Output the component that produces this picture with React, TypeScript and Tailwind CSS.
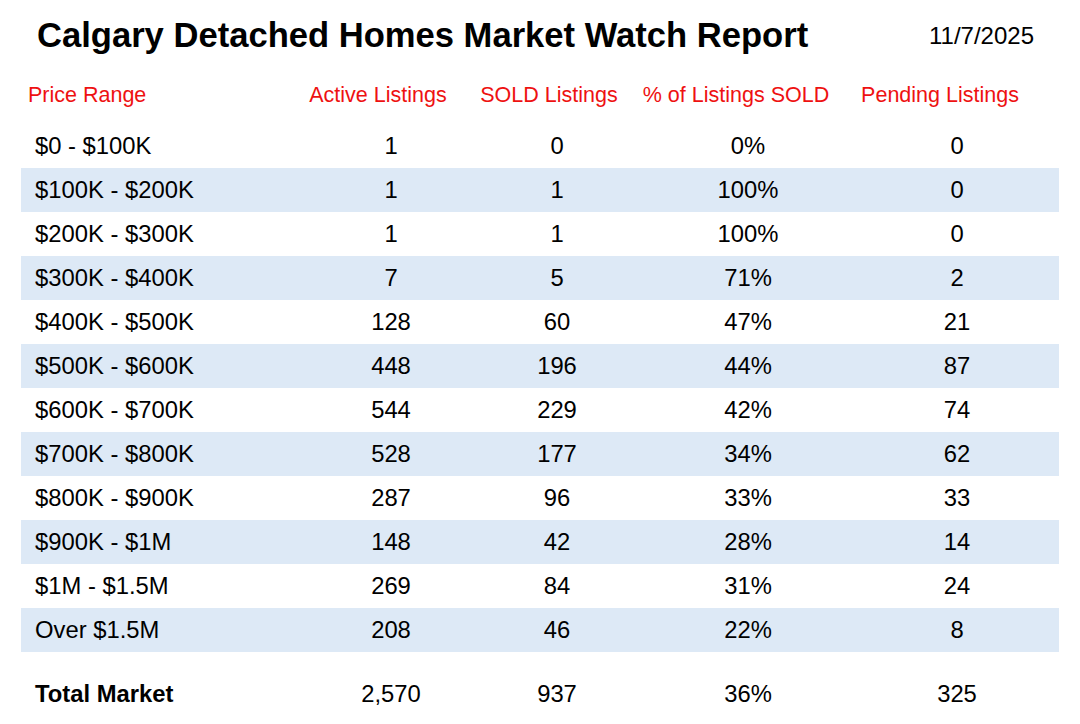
const rows: [string, string, string, string, string][] = [
  ["$0 - $100K", "1", "0", "0%", "0"],
  ["$100K - $200K", "1", "1", "100%", "0"],
  ["$200K - $300K", "1", "1", "100%", "0"],
  ["$300K - $400K", "7", "5", "71%", "2"],
  ["$400K - $500K", "128", "60", "47%", "21"],
  ["$500K - $600K", "448", "196", "44%", "87"],
  ["$600K - $700K", "544", "229", "42%", "74"],
  ["$700K - $800K", "528", "177", "34%", "62"],
  ["$800K - $900K", "287", "96", "33%", "33"],
  ["$900K - $1M", "148", "42", "28%", "14"],
  ["$1M - $1.5M", "269", "84", "31%", "24"],
  ["Over $1.5M", "208", "46", "22%", "8"],
];

function Row({ cells, shaded, bold }: { cells: string[]; shaded?: boolean; bold?: boolean }) {
  return (
    <div
      className={`grid grid-cols-[300px_140px_192px_190px_216px] h-[44px] items-center text-[23.8px] text-black ${
        shaded ? "bg-[#dde9f6]" : ""
      }`}
    >
      <div className={`pl-[14px] whitespace-nowrap ${bold ? "font-bold" : ""}`}>{cells[0]}</div>
      <div className="text-center">{cells[1]}</div>
      <div className="text-center">{cells[2]}</div>
      <div className="text-center">{cells[3]}</div>
      <div className="text-center pl-[12px]">{cells[4]}</div>
    </div>
  );
}

export default function App() {
  return (
    <div className="w-[1080px] h-[724px] bg-white font-['Liberation_Sans',Arial,sans-serif] overflow-hidden">
      <div className="flex items-center justify-between h-[72px] pl-[37px] pr-[46px]">
        <h1 className="text-[34.6px] font-bold text-black whitespace-nowrap">
          Calgary Detached Homes Market Watch Report
        </h1>
        <span className="text-[24px] text-black">11/7/2025</span>
      </div>
      <div className="grid grid-cols-[279px_156px_186px_188px_220px] mx-[21px] h-[46px] items-center text-[21.5px] text-[#ee1111] whitespace-nowrap">
        <div className="pl-[7px]">Price Range</div>
        <div className="text-center">Active Listings</div>
        <div className="text-center">SOLD Listings</div>
        <div className="text-center">% of Listings SOLD</div>
        <div className="text-center">Pending Listings</div>
      </div>
      <div className="mx-[21px] mt-[6px]">
        {rows.map((r, i) => (
          <Row key={r[0]} cells={r} shaded={i % 2 === 1} />
        ))}
        <div className="mt-[20px]">
          <Row cells={["Total Market", "2,570", "937", "36%", "325"]} bold />
        </div>
      </div>
    </div>
  );
}
